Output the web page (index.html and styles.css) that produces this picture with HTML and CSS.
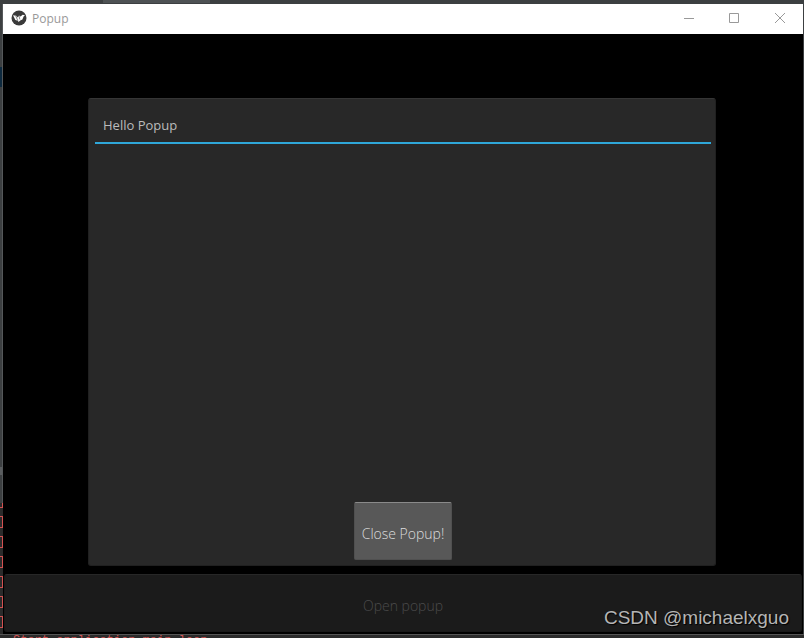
FILE: index.html
```html
<!DOCTYPE html>
<html lang="en">
<head>
    <meta charset="UTF-8">
    <meta name="viewport" content="width=device-width, initial-scale=1.0">
    <title>Popup</title>
    <link rel="stylesheet" href="styles.css">
</head>
<body>
    <div class="editor-top"><span class="editor-tab"></span></div>

    <div class="workspace">
        <div class="editor-gutter">
            <span class="selected-line"></span>
            <span class="splitter"></span>
            <div class="console-brackets">
                <i></i><i></i><i></i><i></i><i></i><i></i><i></i>
            </div>
        </div>

        <main class="window">
            <header class="title-bar">
                <svg class="app-icon" viewBox="0 0 16 16" aria-hidden="true">
                    <circle cx="8" cy="8" r="7.5" fill="#3a3a3a"/>
                    <path d="M2 5.2 5.2 5.8 6.8 7.6 8 5.6 9.6 6.4 11.6 4.8 14 5.2 12.6 6.4 11.4 9.4 9.2 10.4 7.6 12 6.9 10.8 4.4 10Z" fill="#fff"/>
                    <path d="m4.8 6 2 4.6M8 5.8l.8 3.6" stroke="#3a3a3a" stroke-width=".6" fill="none"/>
                </svg>
                <span class="window-title">Popup</span>
                <div class="window-controls">
                    <button type="button" aria-label="Minimize">
                        <svg viewBox="0 0 10 10"><path d="M1 5.5h10"/></svg>
                    </button>
                    <button type="button" aria-label="Maximize">
                        <svg viewBox="0 0 10 10"><path d="M.5.5h9v9h-9z"/></svg>
                    </button>
                    <button type="button" aria-label="Close">
                        <svg viewBox="0 0 10 10"><path d="m0 0 10 10M10 0 0 10"/></svg>
                    </button>
                </div>
            </header>

            <div class="app">
                <div class="stage">
                    <section class="popup" role="dialog" aria-labelledby="popupTitle">
                        <h1 id="popupTitle">Hello Popup</h1>
                        <div class="popup-content">
                            <button type="button" class="close-btn">Close Popup!</button>
                        </div>
                    </section>
                </div>
                <button type="button" class="open-btn">Open popup</button>
            </div>
        </main>
    </div>

    <div class="console"><span>Start application main loop</span></div>
    <div class="watermark">CSDN @michaelxguo</div>
</body>
</html>
```

FILE: styles.css
```css
:root {
    --editor: #3c3f41;
    --console: #2b2b2b;
    --panel: #282828;
    --accent: #2fa7d9;
    --log: #d25252;
}

* {
    box-sizing: border-box;
}

body {
    margin: 0;
    height: 100vh;
    display: flex;
    flex-direction: column;
    overflow: hidden;
    background-color: var(--editor);
    font-family: "Open Sans", "Noto Sans", sans-serif;
}

button {
    margin: 0;
    padding: 0;
    border: none;
    background: none;
    font-family: inherit;
}

.editor-top {
    flex: none;
    height: 4px;
    padding-left: 103px;
}

.editor-tab {
    display: block;
    width: 107px;
    height: 3px;
    background-color: #4e5254;
}

.workspace {
    flex: 1;
    min-height: 0;
    display: flex;
    padding-right: 1px;
}

.editor-gutter {
    flex: none;
    width: 3px;
    display: flex;
    flex-direction: column;
    border-right: 1px solid #55585a;
}

.selected-line {
    height: 20px;
    margin-top: 63px;
    background-color: #0d293e;
}

.splitter {
    height: 8px;
    margin-top: auto;
    margin-bottom: 28px;
    background-color: #5a5d5f;
}

.console-brackets {
    flex: none;
    margin-right: -1px;
    background-color: var(--console);
}

.console-brackets i {
    display: block;
    height: 12px;
    margin-bottom: 8px;
    border: 1px solid var(--log);
    border-left: none;
}

.console-brackets i:first-child {
    height: 5px;
    border-top: none;
}

.console-brackets i:last-child {
    margin-bottom: 6px;
}

.window {
    flex: 1;
    display: flex;
    flex-direction: column;
    background-color: #000;
}

.title-bar {
    flex: none;
    height: 30px;
    display: flex;
    align-items: center;
    padding-left: 8px;
    background-color: #fff;
    color: #999;
}

.app-icon {
    width: 16px;
    height: 16px;
    margin-bottom: 2px;
}

.window-title {
    margin-left: 5px;
    font-size: 12px;
    line-height: 16px;
}

.window-controls {
    display: flex;
    height: 100%;
    margin-left: auto;
}

.window-controls button {
    width: 46px;
    padding-bottom: 2px;
}

.window-controls svg {
    display: block;
    width: 10px;
    height: 10px;
    margin: auto;
    fill: none;
    stroke: #999;
    overflow: visible;
}

.app {
    flex: 1;
    min-height: 0;
    display: flex;
    flex-direction: column;
    padding-bottom: 2px;
}

.stage {
    flex: 1;
    display: flex;
    padding: 64px 87px 8px 85px;
}

.popup {
    flex: 1;
    display: flex;
    flex-direction: column;
    padding: 6px 4px 5px 6px;
    border: 1px solid #202020;
    border-top-color: #353535;
    border-radius: 3px;
    background-color: var(--panel);
}

.popup h1 {
    margin: 0;
    padding: 11px 8px 7px;
    border-bottom: 2px solid var(--accent);
    color: #bbb;
    font-size: 13px;
    font-weight: 400;
    line-height: 19px;
}

.popup-content {
    flex: 1;
    display: flex;
    align-items: flex-end;
    justify-content: center;
}

.close-btn,
.open-btn {
    height: 58px;
    padding-top: 4px;
    font-size: 14px;
    font-weight: 300;
}

.close-btn {
    width: 98px;
    border: 1px solid #505050;
    border-top-color: #8a8a8a;
    border-radius: 2px;
    background-color: #585858;
    color: #ddd;
}

.open-btn {
    flex: none;
    margin: 0 1px;
    border: 1px solid #181818;
    border-top-color: #272727;
    border-radius: 3px;
    background-color: #1b1b1b;
    color: #4b4b4b;
}

.console {
    flex: none;
    height: 4px;
    padding-left: 13px;
    border-top: 1px solid #555;
    overflow: hidden;
    background-color: var(--console);
    color: var(--log);
    font: 12px/13px "Liberation Mono", monospace;
}

.watermark {
    position: absolute;
    right: 15px;
    bottom: 8px;
    color: #b5b5b5;
    font: 19px/24px "Liberation Sans", sans-serif;
    text-shadow: 1px 1px 1px #000;
}
```
